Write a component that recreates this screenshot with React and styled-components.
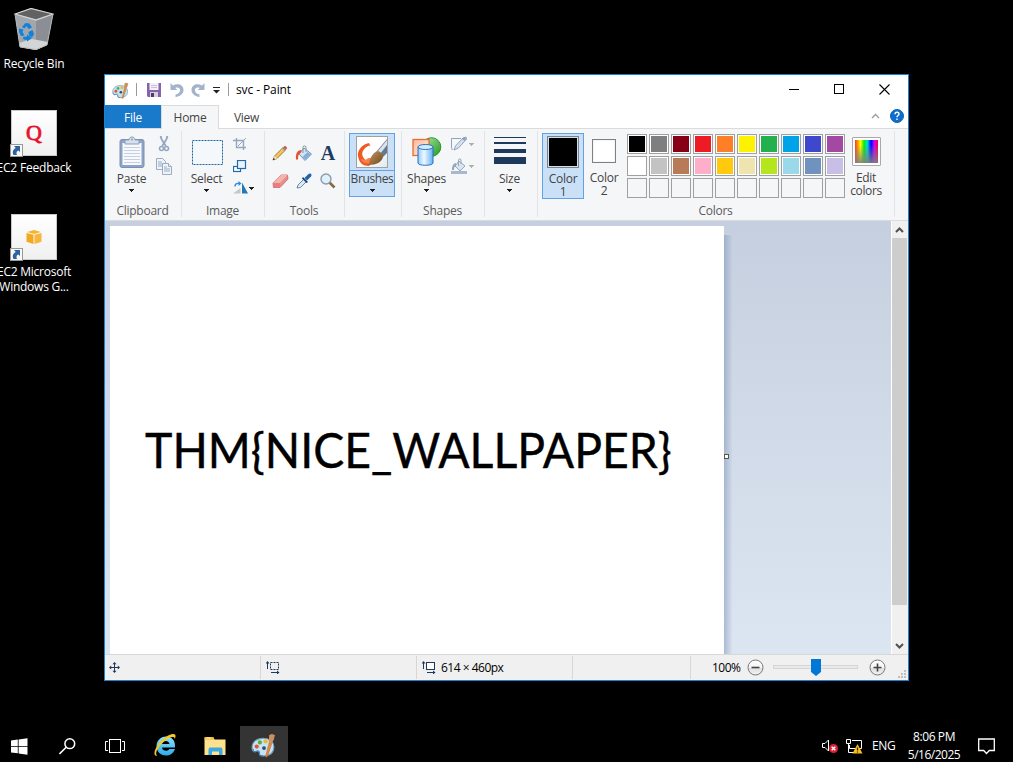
import React from 'react';
import styled, { createGlobalStyle, css } from 'styled-components';

const Global = createGlobalStyle`
  * { box-sizing: border-box; }
  html, body { margin: 0; background: #000; overflow: hidden; }
  body { font-family: "Open Sans", "Noto Sans", sans-serif; font-size: 12px; color: #000; }
  svg { display: block; flex: none; }
`;

const Desktop = styled.div`
  position: relative;
  width: 1013px;
  height: 762px;
  overflow: hidden;
  background: #000;
`;

const Text = styled.span`
  display: block;
  white-space: nowrap;
  font-size: 12px;
  line-height: ${p => p.$lh || 16}px;
  letter-spacing: ${p => p.$ls ?? -0.25}px;
`;

/* ---------- desktop shortcuts ---------- */

const Shortcut = styled.div`
  position: absolute;
  left: -16px;
  top: ${p => p.$top}px;
  width: 100px;
  display: flex;
  flex-direction: column;
  align-items: center;
  gap: ${p => p.$gap || 4}px;
  color: #fff;
  text-align: center;
`;

const ShortcutTile = styled.div`
  width: 46px;
  height: 46px;
  display: flex;
  align-items: center;
  justify-content: center;
  position: relative;
  border: 1px solid #c9c9c9;
  background: linear-gradient(#fff, #f0f0f0);
`;

const QMark = styled.span`
  font: 22px/24px "Liberation Serif", serif;
  -webkit-text-stroke: .8px #e8112d;
  color: #e8112d;
`;

const ArrowBadge = styled.div`
  position: absolute;
  left: -2px;
  bottom: -2px;
`;

const ShortcutArrow = () => (
  <ArrowBadge>
    <svg width="13" height="13" viewBox="0 0 13 13">
      <rect x=".5" y=".5" width="12" height="12" fill="#f8f8f8" stroke="#999" />
      <path d="M4 2h6v6L8.300 6.500C6.500 7 6 9 7 11H3.500C2 8 3 5.500 5.800 4z" fill="#2f62a3" />
    </svg>
  </ArrowBadge>
);

const RecycleBin = () => (
  <svg width="40" height="42" viewBox="0 0 40 42">
    <path d="M1 6 17 0 39 6 33 37 22 42 6 39z" fill="#85888d" />
    <path d="M1 6 22 12 22 42 6 39z" fill="#a3a6ab" />
    <path d="M22 12 39 6 33 37 22 42z" fill="#8b8f95" />
    <path d="M2 6 17 1 38 6 22 11z" fill="#626262" />
    <path d="M5 35 18 31 34 34 33 37 22 42 6 39z" fill="#d4d5d6" />
    <path d="M1 6 17 .500 39 6 22 12z" fill="none" stroke="#d3d5d8" strokeWidth="1.200" />
    <path d="M1 6 6 39 22 41.500 33 37 39 6" fill="none" stroke="#b6b8bb" />
    <g fill="#0d83dd">
      <path d="m8 19 3.500-4 4 .5 2.500 4-3.500 1.500-2-3-2 2.500z" />
      <path d="m5 20.500 4.500 1-1 2.500 2 3.500-3.500.5-2-4z" />
      <path d="m9 29 4-.5v-2l5 3.500-5 3.500v-1.500l-3.500-.5z" />
      <path d="m14.500 24 4-2 1.500 4-2 3.500-3-2z" />
    </g>
  </svg>
);

const AwsCube = () => (
  <svg width="16" height="16" viewBox="0 0 16 16">
    <path d="M1 3 8 1l7 2-7 2z" fill="#f8b52c" />
    <path d="M.5 4 7.500 5.800V15L.5 12.800z" fill="#f2a91f" />
    <path d="M8.500 5.800 15.500 4v8.800L8.500 15z" fill="#f6b73c" />
  </svg>
);

/* ---------- window frame ---------- */

const Window = styled.div`
  position: absolute;
  left: 104px;
  top: 74px;
  width: 805px;
  height: 607px;
  border: 1px solid #1883d7;
  background: #fff;
  display: flex;
  flex-direction: column;
`;

const TitleBar = styled.div`
  height: 30px;
  display: flex;
  align-items: center;
  padding-left: 7px;
`;

const TitleSlot = styled.div`
  width: ${p => p.$w}px;
  height: 100%;
  display: flex;
  align-items: center;
`;

const ThinSep = styled.div`
  width: 1px;
  height: 13px;
  margin-bottom: 2px;
  background: #9b9b9b;
`;

const Controls = styled.div`
  margin-left: auto;
  display: flex;
`;

const ControlButton = styled.div`
  width: ${p => p.$w || 45}px;
  height: 30px;
  display: flex;
  align-items: center;
  justify-content: center;
  padding-bottom: 2px;
`;

const TabBar = styled.div`
  height: 24px;
  display: flex;
  border-bottom: 1px solid #dadbdc;
  color: #444;
`;

const Tab = styled.div`
  width: ${p => p.$w}px;
  height: 23px;
  display: flex;
  align-items: center;
  justify-content: center;
  padding-top: 2px;
  ${p => p.$file && css`
    background: #1979ca;
    color: #fff;
  `}
  ${p => p.$active && css`
    height: 24px;
    border: 1px solid #dadbdc;
    border-bottom: 0;
    padding-top: 0;
    background: #f5f6f7;
  `}
`;

const TabTools = styled.div`
  margin-left: auto;
  display: flex;
  align-items: center;
  gap: 10px;
  padding: 0 4px 2px 0;
`;

/* ---------- ribbon ---------- */

const Ribbon = styled.div`
  height: 92px;
  display: flex;
  background: #f5f6f7;
  border-bottom: 1px solid #dadbdc;
  color: #444;
`;

const Group = styled.div`
  width: ${p => p.$w}px;
  height: 86px;
  margin-top: 2px;
  border-right: 1px solid #e2e3e4;
  display: flex;
  flex-direction: column;
`;

const GroupBody = styled.div`
  height: 71px;
  flex: none;
  display: flex;
  padding-left: ${p => p.$pl || 0}px;
`;

const GroupLabel = styled(Text)`
  text-align: center;
  color: #5b5b5b;
  padding: 1px 1px 0 0;
`;

const BigButton = styled.div`
  width: ${p => p.$w}px;
  height: ${p => p.$h || 64}px;
  margin-top: 2px;
  display: flex;
  flex-direction: column;
  align-items: center;
  text-align: center;
  ${p => p.$on && css`
    background: #c9e0f7;
    box-shadow: inset 0 0 0 1px #62a2e4;
  `}
`;

const IconArea = styled.div`
  height: 37px;
  width: 100%;
  display: flex;
  align-items: center;
  justify-content: center;
  ${p => p.$split && css`
    height: 38px;
    margin-bottom: -1px;
    border-bottom: 1px solid #62a2e4;
  `}
`;

const TwoLines = styled(Text)`
  line-height: 13px;
  padding-top: 2px;
`;

const SideColumn = styled.div`
  display: flex;
  flex-direction: column;
  margin-left: ${p => p.$ml || 0}px;
  padding-top: 2px;
`;

const SideRow = styled.div`
  height: 22px;
  display: flex;
  align-items: center;
  gap: ${p => p.$gap ?? 3}px;
`;

const ToolGrid = styled.div`
  display: grid;
  grid-template-columns: repeat(3, 24px);
  grid-template-rows: repeat(2, 28px);
  padding: 8px 0 0 3px;
  place-items: center;
`;

const Palette = styled.div`
  display: grid;
  grid-template-columns: repeat(10, 20px);
  grid-auto-rows: 20px;
  gap: 2px;
  margin: 3px 0 0 3px;
`;

const Swatch = styled.div`
  border: 1px solid #a0a0a0;
  padding: 1px;
  background: ${p => (p.$c ? '#fff' : '#f5f6f7')};
  &::after {
    content: '';
    display: block;
    height: 100%;
    background: ${p => p.$c || 'transparent'};
  }
`;

const ColorBox = styled.div`
  width: ${p => p.$s}px;
  height: ${p => p.$s}px;
  border: 1px solid #808080;
  padding: 1px;
  background: ${p => p.$c} content-box;
`;

const Down = ({ c = '#1e1e1e' }) => (
  <svg width="5" height="3" viewBox="0 0 5 3" shapeRendering="crispEdges">
    <path d="M0 0h5v1H4v1H3v1H2V2H1V1H0z" fill={c} />
  </svg>
);

const LabelSlot = styled.div`
  height: 16px;
  padding-top: 1px;
`;

const ArrowSlot = styled.div`
  height: 8px;
  display: flex;
  align-items: center;
`;

const PaletteIcon = ({ s }) => (
  <svg width={s} height={s} viewBox="0 0 24 24">
    <path d="M12 5C5 5 1 9 1 14c0 3 1 4 3 4 2-1 4-1 4 1s0 3 4 3c7 0 10-4 10-9 0-4-4-8-10-8z" fill="#c6e2f3" stroke="#6b9dbd" />
    <path d="M2 15c0 2 1 3 2 3 2-1 4-1 4 1 0 3 1 3 4 3" fill="none" stroke="#4380a8" />
    <circle cx="5.500" cy="13" r="2" fill="#e8503a" />
    <circle cx="8.500" cy="9" r="2" fill="#52b043" />
    <circle cx="14" cy="8" r="2" fill="#f4b431" />
    <circle cx="12.500" cy="14.500" r="1.800" fill="#284f70" />
    <path d="m14 23 3.500-14 2.500 1-4.500 13z" fill="#e58b3a" stroke="#b8601f" strokeWidth=".5" />
    <path d="m17 9 .5-7 2.500-1 3 1-1 4-2 4z" fill="#c99060" />
  </svg>
);

const SaveIcon = () => (
  <svg width="14" height="14" viewBox="0 0 14 14">
    <path d="M0 0h14v14H1L0 13z" fill="#8561ae" />
    <path d="M2.500 0h9v7h-9z" fill="#f3f1f6" />
    <path d="M4 2.500h6M4 4.500h6" stroke="#c9c2d4" />
    <path d="M3 9h8v5H3z" fill="#d5d0dc" />
    <path d="M4 10h3v4H4z" fill="#4b3d63" />
  </svg>
);

const Undo = ({ flip }) => (
  <svg width="14" height="14" viewBox="0 0 14 14">
    <g transform={flip ? 'matrix(-1 0 0 1 14 0)' : undefined}>
      <path d="M.5 0v7h7L5.200 5C8 3.800 10.300 5 10 7.800c-.3 2-2 3.200-4.500 3.700V14c5-.6 8-3.300 8-7.200C13.500 1.500 7.500-.2 2.900 2.500z" fill="#a3b3cb" />
    </g>
  </svg>
);

const PasteIcon = () => (
  <svg width="26" height="32" viewBox="0 0 26 32">
    <rect x="1" y="3.500" width="24" height="28" rx="2" fill="#8fa3c4" stroke="#7b90b4" />
    <rect x="3.500" y="7" width="19" height="22" fill="#f7f9fc" />
    <path d="M5 11.500h16M5 14.500h16M5 17.500h16M5 20.500h16M5 23.500h16M5 26.500h16" stroke="#c5d1e2" />
    <path d="M6 8V4h4c0-4 6-4 6 0h4v4z" fill="#d8e0ec" stroke="#8a9dbd" />
    <circle cx="13" cy="3.500" r="1" fill="#8a9dbd" />
  </svg>
);

const CutIcon = () => (
  <svg width="16" height="16" viewBox="0 0 16 16" fill="none" stroke="#95a6c1">
    <path d="M4.700 0c0 4 4 7 5 10M11.300 0c0 4-4 7-5 10" strokeWidth="1.800" />
    <circle cx="5.500" cy="12.500" r="2" strokeWidth="1.500" />
    <circle cx="10.500" cy="12.500" r="2" strokeWidth="1.500" />
  </svg>
);

const CopyIcon = () => (
  <svg width="16" height="17" viewBox="0 0 16 17" fill="#f0f4f9" stroke="#9aabc6">
    <path d="M.5.5h6l3 3v8h-9z" />
    <path d="M2 4h4M2 6h5M2 8h5" />
    <path d="M6.500 5.500h6l3 3v8h-9z" />
    <path d="M12.500 5.500v3h3M8 9h3M8 11h6M8 13h6" />
  </svg>
);

const SelectIcon = () => (
  <svg width="33" height="27" viewBox="0 0 33 27">
    <rect x="2.500" y="2.500" width="30" height="24" fill="#f5f8fb" stroke="#1565a7" strokeDasharray="2 1" />
  </svg>
);

const CropIcon = () => (
  <svg width="14" height="14" viewBox="0 0 14 14" fill="none" stroke="#93a7c3">
    <path d="M3.500 1v9.500H13M0 3.500h10.500V13" strokeWidth="1.400" />
    <path d="m5 9 8-8" />
  </svg>
);

const ResizeIcon = () => (
  <svg width="14" height="13" viewBox="0 0 14 13" stroke="#1f6ba8" strokeWidth="1.200">
    <rect x=".5" y="6.500" width="7" height="5" fill="#fff" />
    <rect x="4.500" y=".5" width="8" height="8" fill="#eaf3fb" />
  </svg>
);

const RotateIcon = () => (
  <svg width="15" height="14" viewBox="0 0 15 14">
    <path d="M0 12.500 7.500 7v5.500z" fill="#c3c8cd" />
    <path d="M9 1.500 15 12.500H9z" fill="#2678b3" />
    <path d="M2 5.500C2 3 3.500 2 6.500 2.500" fill="none" stroke="#2a8be0" strokeWidth="1.500" />
    <path d="m5.500 0 3 2.500-3 2.500z" fill="#2a8be0" />
  </svg>
);

const PencilIcon = () => (
  <svg width="16" height="16" viewBox="0 0 16 16">
    <path d="m1 15 1.500-4L11 2.500l2.500 2.500L5 13.500z" fill="#f1c45c" stroke="#91631e" strokeWidth=".8" />
    <path d="m11.300 2.300 1.200-1.300h1L15 2.500v1L13.700 4.700z" fill="#d9505c" />
    <path d="m10.200 3.300 1-1 2.500 2.500-1 1z" fill="#6b9a8d" />
    <path d="m2.500 11 2.500 2.500L1 15z" fill="#f7e6c8" />
    <path d="m.8 15.200.9-2.300 1.400 1.400z" fill="#222" />
  </svg>
);

const BucketIcon = () => (
  <svg width="18" height="17" viewBox="0 0 18 17">
    <path d="m9 3 7.500 6L10 15.500 4 9z" fill="#d3e3f3" stroke="#6f93b8" />
    <path d="M10.500 15 16 9.500 12.500 7 7.500 12z" fill="#84afd8" />
    <path d="M8 8V2c0-1.500 3-1.500 3 0v5" fill="none" stroke="#8b95a1" />
    <path d="M6.500 5C2 5 .5 9 1 14.500h2C3 11 3.500 8.500 6 7.500z" fill="#e4512b" />
  </svg>
);

const Glyph = styled.span`
  font: bold 20px/16px "Liberation Serif", serif;
  color: #1f3a63;
`;

const EraserIcon = () => (
  <svg width="17" height="15" viewBox="0 0 17 15">
    <path d="m1 9 8-8h6.500L16 5l-8 8.500H1.500z" fill="#ea8d8d" stroke="#c46666" strokeWidth=".8" />
    <path d="m1 9 8-8h6.500L8 9z" fill="#f5b3ae" />
    <path d="M1 9h7v4.500H1.500z" fill="#e67f80" />
  </svg>
);

const PickerIcon = () => (
  <svg width="16" height="16" viewBox="0 0 16 16">
    <path d="m1 15 1-3 6-6 2.500 2.500-6 6z" fill="#d8ebf8" stroke="#617d99" strokeWidth=".9" />
    <path d="m7 4 5 5-1.500 1L6 5.500z" fill="#193f73" />
    <path d="m8.500 5 4-4c2-1.500 4 .5 2.500 2.500l-4 4z" fill="#1d65b1" />
  </svg>
);

const MagnifierIcon = () => (
  <svg width="16" height="16" viewBox="0 0 16 16">
    <path d="m9 9 5.500 5.500" stroke="#8a6844" strokeWidth="2.600" />
    <circle cx="6" cy="6" r="5" fill="#e0f0fc" stroke="#8d9bab" strokeWidth="1.400" />
  </svg>
);

const BrushIcon = () => (
  <svg width="32" height="32" viewBox="0 0 32 32">
    <defs>
      <linearGradient id="bristle" x1="0" y1="0" x2="1" y2="1">
        <stop offset="0" stopColor="#c59663" />
        <stop offset="1" stopColor="#704619" />
      </linearGradient>
      <linearGradient id="paper" x2="1" y2="1">
        <stop offset=".5" stopColor="#fff" />
        <stop offset="1" stopColor="#dcebf2" />
      </linearGradient>
    </defs>
    <rect x=".5" y=".5" width="31" height="31" fill="url(#paper)" stroke="#a0a0a0" />
    <path d="M13 7C6 8 1 15 2 20c1 7 5 10 11 10l4-4-3-4-4 2C5 21 4 14 13 9.500l1.500 1z" fill="#ee5a23" />
    <path d="M5 23c1 4 5 5 9 4l2-4-4-1-2 2z" fill="#f98048" />
    <path d="M21 15 31 3v14l-4 4z" fill="#65798f" />
    <path d="m22 15 9-11v5l-7 9z" fill="#d8e5ee" />
    <path d="M13 29c0-6 3-11 8-14 3 0 6 3 6 6-1 5-7 8-14 8z" fill="url(#bristle)" />
  </svg>
);

const ShapesIcon = () => (
  <svg width="30" height="30" viewBox="0 0 30 30">
    <defs>
      <linearGradient id="cyl"><stop offset="0" stopColor="#8fcaff" /><stop offset=".4" stopColor="#eff9ff" /><stop offset="1" stopColor="#63b2f8" /></linearGradient>
      <linearGradient id="sq" x2="1" y2="1"><stop offset="0" stopColor="#ffb99a" /><stop offset="1" stopColor="#fff0e9" /></linearGradient>
      <linearGradient id="gr" x2="1" y2="1"><stop offset="0" stopColor="#b3e5a6" /><stop offset="1" stopColor="#1c9b21" /></linearGradient>
    </defs>
    <circle cx="19.500" cy="10" r="9.300" fill="url(#gr)" stroke="#2c952f" />
    <rect x="1" y="2.500" width="16" height="16" fill="url(#sq)" stroke="#e86a35" strokeWidth="1.300" />
    <path d="M6 10v16c0 3 15 3 15 0V10" fill="url(#cyl)" stroke="#2a6fbd" />
    <ellipse cx="13.500" cy="10" rx="7.500" ry="2.500" fill="#d5ecff" stroke="#2a6fbd" />
  </svg>
);

const OutlineIcon = () => (
  <svg width="16" height="16" viewBox="0 0 16 16">
    <path d="M10 2.500H.5v10M.5 13.500 2 13" stroke="#8fa3c1" fill="none" />
    <path d="m3 14 1.500-4L12 2l3-1 .5 2-8 9z" fill="#d8e2ee" stroke="#8fa3c1" />
    <path d="m11 3 2-2 2.500 2-2 2z" fill="#8fa3c1" />
  </svg>
);

const FillIcon = () => (
  <svg width="16" height="17" viewBox="0 0 16 17">
    <path d="m8 3 6 5-5 5-5-5z" fill="#dbe3ed" stroke="#94a7c1" />
    <path d="M7.500 8V2c0-1.500 2.500-1.500 2.500 0v4" fill="none" stroke="#94a7c1" />
    <path d="M5 5C2 5.500 1 8 1 12h2c0-2 0-3 2-4z" fill="#94a7c1" />
    <path d="M0 13h16v3H0z" fill="#a9b8ce" />
  </svg>
);

const SizeIcon = () => (
  <svg width="32" height="29" viewBox="0 0 32 29" shapeRendering="crispEdges">
    <path d="M0 0h32v1H0zM0 5h32v2H0zM0 12h32v4H0zM0 20h32v7H0z" fill="#1e395b" />
  </svg>
);

const Rainbow = styled.div`
  width: 29px;
  height: 29px;
  border: 1px solid #a9a9a9;
  border-radius: 1px;
  box-shadow: inset 0 0 0 1px #fff;
  padding: 2px;
  background:
    linear-gradient(rgba(128,128,128,0) 20%, rgba(128,128,128,.9)) content-box,
    linear-gradient(90deg, #f33, #f90 12%, #ff0 24%, #0e0 40%, #0dd 53%, #00f 70%, #c0f 84%, #f03) content-box,
    #fff;
`;

/* ---------- drawing area ---------- */

const Workspace = styled.div`
  height: 433px;
  display: flex;
  background: linear-gradient(#c5cfdf, #dce6f2);
`;

const Canvas = styled.div`
  width: 614px;
  height: 428px;
  margin: 5px 0 0 5px;
  position: relative;
  background: #fff;
`;

const CanvasShadow = styled.div`
  width: 8px;
  margin-top: 14px;
  background: linear-gradient(90deg, rgba(130,150,185,.55), rgba(130,150,185,.05));
`;

const Drawing = styled.span`
  position: absolute;
  left: 35px;
  top: 194px;
  font: 400 48px/60px Lato, sans-serif;
  white-space: nowrap;
  transform-origin: 0 50%;
  transform: scaleX(.966);
  -webkit-text-stroke: .4px #000;
`;

const Handle = styled.div`
  position: absolute;
  right: -5px;
  top: 228px;
  width: 5px;
  height: 5px;
  border: 1px solid #555;
  background: #fff;
`;

const Scrollbar = styled.div`
  margin-left: auto;
  width: 17px;
  height: 433px;
  background: #f0f0f0;
  border-left: 1px solid #fff;
  display: flex;
  flex-direction: column;
`;

const ScrollButton = styled.div`
  height: 17px;
  display: flex;
  align-items: center;
  justify-content: center;
  padding-right: 1px;
`;

const Thumb = styled.div`
  height: 367px;
  margin: 0 1px 32px 0;
  background: #cdcdcd;
`;

const Chevron = ({ down, c = '#505050', sw = 2 }) => (
  <svg width="9" height="6" viewBox="0 0 9 6">
    <path d={down ? 'M1 1l3.500 3.500L8 1' : 'M1 5l3.500-3.500L8 5'} fill="none" stroke={c} strokeWidth={sw} />
  </svg>
);

/* ---------- status bar ---------- */

const StatusBar = styled.div`
  height: 26px;
  display: flex;
  align-items: center;
  background: #f0f0f0;
  border-top: 1px solid #d7d7d7;
`;

const StatusCell = styled.div`
  width: ${p => p.$w}px;
  height: 23px;
  display: flex;
  align-items: center;
  padding-left: ${p => p.$pl ?? 5}px;
  gap: 5px;
  border-right: 1px solid #d7d7d7;
`;

const ZoomArea = styled.div`
  flex: 1;
  height: 25px;
  display: flex;
  align-items: center;
  padding-left: 21px;
`;

const ZoomText = styled(Text)`
  width: 35px;
`;

const SliderTrack = styled.div`
  width: 85px;
  height: 4px;
  margin: 0 11px 1px 9px;
  border: 1px solid #d6d6d6;
  background: #e7eaea;
  display: flex;
  align-items: center;
  padding-left: 37px;
`;

const Grip = styled.div`
  align-self: flex-end;
  margin: 0 2px 2px auto;
`;

const ZoomButton = ({ plus }) => (
  <svg width="17" height="17" viewBox="0 0 17 17">
    <defs>
      <linearGradient id="zb" x2="0" y2="1"><stop offset="0" stopColor="#fff" /><stop offset=".5" stopColor="#f5f5f5" /><stop offset=".51" stopColor="#dcdcdc" /><stop offset="1" stopColor="#f4f4f4" /></linearGradient>
    </defs>
    <circle cx="8.500" cy="8.500" r="7.500" fill="url(#zb)" stroke="#777" />
    <path d={plus ? 'M4.500 8.500h8M8.500 4.500v8' : 'M4.500 8.500h8'} stroke="#444" strokeWidth="1.600" />
  </svg>
);

const MoveIcon = () => (
  <svg width="11" height="11" viewBox="0 0 11 11">
    <path d="M5.500 1v9M1 5.500h9" stroke="#1e395b" />
    <path d="M5.500 0 7.500 2.200h-4zM5.500 11l2-2.200h-4zM0 5.500l2.200-2v4zM11 5.500l-2.200-2v4z" fill="#1e395b" />
  </svg>
);

const DimIcon = ({ dashed }) => (
  <svg width="14" height="13" viewBox="0 0 14 13">
    <path d="M1.500 1.500V8" stroke="#1e395b" />
    <path d="M1.500 0 3.500 2.500h-4z" fill="#1e395b" />
    <rect x="4.500" y="1.500" width="8" height="7" fill={dashed ? 'none' : '#fff'} stroke="#1e395b" strokeDasharray={dashed ? '2 1' : undefined} />
    <path d="M5 11.500h7" stroke="#1e395b" />
    <path d="m13.500 11.500-2.500-2v4z" fill="#1e395b" />
  </svg>
);

/* ---------- taskbar ---------- */

const Taskbar = styled.div`
  position: absolute;
  left: 0;
  top: 726px;
  width: 1013px;
  height: 40px;
  display: flex;
  color: #fff;
`;

const TaskButton = styled.div`
  width: 48px;
  display: flex;
  align-items: center;
  justify-content: center;
  background: ${p => (p.$active ? '#343434' : 'transparent')};
  padding: 0 ${p => p.$pr || 0}px ${p => p.$pb || 0}px 0;
`;

const Tray = styled.div`
  margin-left: auto;
  display: flex;
  align-items: center;
  padding-right: 18px;
`;

const TraySlot = styled.div`
  width: ${p => p.$w}px;
`;

const Clock = styled.div`
  width: 56px;
  margin-right: 16px;
  display: flex;
  flex-direction: column;
  align-items: center;
  gap: 2px;
`;

const WindowsLogo = () => (
  <svg width="17" height="17" viewBox="0 0 17 17" fill="#fff">
    <path d="M0 2.600 6.800 1.600V8H0zM7.600 1.500 16.500.2V8H7.600zM0 8.800h6.800v6.500L0 14.400zM7.600 8.800h8.900v7.900l-8.900-1.300z" />
  </svg>
);

const SearchIcon = () => (
  <svg width="17" height="17" viewBox="0 0 17 17" fill="none" stroke="#fff" strokeWidth="1.500">
    <circle cx="10.800" cy="5.700" r="4.900" />
    <path d="m7.200 9.200-6.700 6.700" />
  </svg>
);

const TaskViewIcon = () => (
  <svg width="20" height="14" viewBox="0 0 20 14" fill="none" stroke="#fff">
    <rect x="4.500" y=".5" width="11" height="13" />
    <path d="M3 2.500H.5v9H3M17 2.500h2.500v9H17" />
  </svg>
);

const IeIcon = () => (
  <svg width="24" height="24" viewBox="0 0 24 24">
    <defs><linearGradient id="ie" x2="0" y2="1"><stop offset="0" stopColor="#8be3fd" /><stop offset="1" stopColor="#2fa9ea" /></linearGradient></defs>
    <path d="M22 14.500H9c.3 3.500 5.500 4.500 7.500 1.500H22c-2 5-5.500 6.500-9 6.500-6 0-9.500-4.500-9.500-9.500S7.500 3.500 13 3.500c6 0 9.500 4 9 11zM9 11h7.500C16 7 9.500 7 9 11z" fill="url(#ie)" />
    <path d="M4 23C-1 23 2 14 8 8 14 2 21-.5 22.300 2c.5 1 .2 2.500-.6 4 0-3-4.500-2.500-10 2C5 13.500 1.500 20 4 23z" fill="#f6c62a" />
  </svg>
);

const FolderIcon = () => (
  <svg width="22" height="19" viewBox="0 0 22 19">
    <path d="M.5 1h9l1 1.500h11V18H.5z" fill="#ffe28b" />
    <path d="M.5 0h9l1 2.500H.5z" fill="#f3b93e" />
    <path d="M2.500 1h4" stroke="#fff4cb" />
    <path d="M4.500 18v-6l1-1.500h12l1 1.500v6h-3.500v-3.500h-7V18z" fill="#3da9e2" />
  </svg>
);

const VolumeIcon = () => (
  <svg width="17" height="16" viewBox="0 0 17 16">
    <path d="M.5 5.500h2.500l3.500-3.500v11L3 9.500H.5z" fill="none" stroke="#fff" />
    <circle cx="11.500" cy="10.500" r="4.500" fill="#e01f32" />
    <path d="m9.700 8.700 3.600 3.600m0-3.600-3.600 3.600" stroke="#fff" strokeWidth="1.400" />
  </svg>
);

const NetworkIcon = () => (
  <svg width="17" height="15" viewBox="0 0 17 15">
    <path d="M6 1.500h9.500v8H3.500V6M.5.5h4v4h-4zM2.500 5v8.500H9" fill="none" stroke="#fff" />
    <path d="m11.500 5 5 9.500h-10z" fill="#fdbd17" />
    <path d="M11.500 8.500v3M11.500 12.500v1" stroke="#222" strokeWidth="1.200" />
  </svg>
);

const ActionIcon = () => (
  <svg width="17" height="17" viewBox="0 0 17 17">
    <path d="M.7 1h15.600v11.500h-5l-2.800 3-2.800-3h-5z" fill="none" stroke="#fff" strokeWidth="1.300" />
  </svg>
);

const SWATCHES = [
  '#000', '#7f7f7f', '#880015', '#ed1c24', '#ff7f27', '#fff200', '#22b14c', '#00a2e8', '#3f48cc', '#a349a4',
  '#fff', '#c3c3c3', '#b97a57', '#ffaec9', '#ffc90e', '#efe4b0', '#b5e61d', '#99d9ea', '#7092be', '#c8bfe7',
  null, null, null, null, null, null, null, null, null, null,
];

const DropLabel = ({ label, ls }) => (
  <>
    <LabelSlot><Text $ls={ls}>{label}</Text></LabelSlot>
    <ArrowSlot><Down /></ArrowSlot>
  </>
);

export default function App() {
  return (
    <Desktop>
      <Global />

      <Shortcut $top={8} $gap={6}>
        <RecycleBin />
        <Text $lh={16} $ls={-0.15}>Recycle Bin</Text>
      </Shortcut>
      <Shortcut $top={110}>
        <ShortcutTile><QMark>Q</QMark><ShortcutArrow /></ShortcutTile>
        <Text $lh={16} $ls={-0.2}>EC2 Feedback</Text>
      </Shortcut>
      <Shortcut $top={214}>
        <ShortcutTile><AwsCube /><ShortcutArrow /></ShortcutTile>
        <Text $lh={15}>EC2 Microsoft<br />Windows G...</Text>
      </Shortcut>

      <Window>
        <TitleBar>
          <TitleSlot $w={24}><PaletteIcon s={17} /></TitleSlot>
          <TitleSlot $w={11}><ThinSep /></TitleSlot>
          <TitleSlot $w={23}><SaveIcon /></TitleSlot>
          <TitleSlot $w={21}><Undo /></TitleSlot>
          <TitleSlot $w={22}><Undo flip /></TitleSlot>
          <TitleSlot $w={15}>
            <svg width="7" height="7" viewBox="0 0 7 7"><path d="M0 .5h7" stroke="#222" /><path d="M0 3h7L3.500 6.500z" fill="#222" /></svg>
          </TitleSlot>
          <TitleSlot $w={8}><ThinSep /></TitleSlot>
          <Text $ls={-0.1}>svc - Paint</Text>
          <Controls>
            <ControlButton><svg width="10" height="10"><path d="M0 5.500h10" stroke="#000" /></svg></ControlButton>
            <ControlButton><svg width="10" height="10"><rect x=".5" y=".5" width="9" height="9" fill="none" stroke="#000" /></svg></ControlButton>
            <ControlButton $w={47}><svg width="11" height="11"><path d="m.5.5 10 10m0-10-10 10" stroke="#000" strokeWidth="1.100" /></svg></ControlButton>
          </Controls>
        </TitleBar>

        <TabBar>
          <Tab $w={56} $file><Text>File</Text></Tab>
          <Tab $w={58} $active><Text>Home</Text></Tab>
          <Tab $w={55}><Text>View</Text></Tab>
          <TabTools>
            <Chevron c="#9a9a9a" sw={1.3} />
            <svg width="14" height="14" viewBox="0 0 14 14">
              <circle cx="7" cy="7" r="6.500" fill="#0a6fd0" stroke="#1c5fa8" />
              <path d="M5 5.300C5 2.600 9 2.600 9 5c0 1.600-2 1.500-2 3.300M7 9.500v1.500" fill="none" stroke="#fff" strokeWidth="1.400" />
            </svg>
          </TabTools>
        </TabBar>

        <Ribbon>
          <Group $w={77}>
            <GroupBody $pl={4}>
              <BigButton $w={45}>
                <IconArea><PasteIcon /></IconArea>
                <DropLabel label="Paste" />
              </BigButton>
              <SideColumn $ml={2}>
                <SideRow><CutIcon /></SideRow>
                <SideRow><CopyIcon /></SideRow>
              </SideColumn>
            </GroupBody>
            <GroupLabel>Clipboard</GroupLabel>
          </Group>

          <Group $w={83}>
            <GroupBody $pl={2}>
              <BigButton $w={45}>
                <IconArea><SelectIcon /></IconArea>
                <DropLabel label="Select" />
              </BigButton>
              <SideColumn $ml={4}>
                <SideRow><CropIcon /></SideRow>
                <SideRow><ResizeIcon /></SideRow>
                <SideRow $gap={1}><RotateIcon /><Down /></SideRow>
              </SideColumn>
            </GroupBody>
            <GroupLabel>Image</GroupLabel>
          </Group>

          <Group $w={80}>
            <GroupBody>
              <ToolGrid>
                <PencilIcon /><BucketIcon /><Glyph>A</Glyph>
                <EraserIcon /><PickerIcon /><MagnifierIcon />
              </ToolGrid>
            </GroupBody>
            <GroupLabel>Tools</GroupLabel>
          </Group>

          <Group $w={57}>
            <GroupBody $pl={4}>
              <BigButton $w={46} $on>
                <IconArea $split><BrushIcon /></IconArea>
                <DropLabel label="Brushes" ls={-0.4} />
              </BigButton>
            </GroupBody>
          </Group>

          <Group $w={83}>
            <GroupBody $pl={1}>
              <BigButton $w={47}>
                <IconArea><ShapesIcon /></IconArea>
                <DropLabel label="Shapes" />
              </BigButton>
              <SideColumn $ml={1}>
                <SideRow $gap={2}><OutlineIcon /><Down c="#b0b0b0" /></SideRow>
                <SideRow $gap={2}><FillIcon /><Down c="#b0b0b0" /></SideRow>
              </SideColumn>
            </GroupBody>
            <GroupLabel>Shapes</GroupLabel>
          </Group>

          <Group $w={53}>
            <GroupBody $pl={2}>
              <BigButton $w={45}>
                <IconArea><SizeIcon /></IconArea>
                <DropLabel label="Size" />
              </BigButton>
            </GroupBody>
          </Group>

          <Group $w={357}>
            <GroupBody $pl={4}>
              <BigButton $w={42} $h={66} $on>
                <IconArea><ColorBox $s={32} $c="#000" /></IconArea>
                <TwoLines $lh={13}>Color<br />1</TwoLines>
              </BigButton>
              <BigButton $w={40}>
                <IconArea><ColorBox $s={24} $c="#fff" /></IconArea>
                <TwoLines $lh={13}>Color<br />2</TwoLines>
              </BigButton>
              <Palette>{SWATCHES.map((c, i) => <Swatch key={i} $c={c} />)}</Palette>
              <BigButton $w={42}>
                <IconArea><Rainbow /></IconArea>
                <TwoLines $lh={13} $ls={-0.35}>Edit<br />colors</TwoLines>
              </BigButton>
            </GroupBody>
            <GroupLabel>Colors</GroupLabel>
          </Group>
        </Ribbon>

        <Workspace>
          <Canvas>
            <Drawing>{'THM{NICE_WALLPAPER}'}</Drawing>
            <Handle />
          </Canvas>
          <CanvasShadow />
          <Scrollbar>
            <ScrollButton><Chevron /></ScrollButton>
            <Thumb />
            <ScrollButton><Chevron down /></ScrollButton>
          </Scrollbar>
        </Workspace>

        <StatusBar>
          <StatusCell $w={156} $pl={4}><MoveIcon /></StatusCell>
          <StatusCell $w={156}><DimIcon dashed /></StatusCell>
          <StatusCell $w={156}><DimIcon /><Text $ls={-0.5}>614 × 460px</Text></StatusCell>
          <StatusCell $w={118} />
          <ZoomArea>
            <ZoomText $ls={-0.5}>100%</ZoomText>
            <ZoomButton />
            <SliderTrack>
              <svg width="10" height="17" viewBox="0 0 10 17"><path d="M0 0h10v13l-5 4-5-4z" fill="#0078d7" /></svg>
            </SliderTrack>
            <ZoomButton plus />
            <Grip>
              <svg width="8" height="8" viewBox="0 0 8 8" fill="#bfbfbf"><path d="M6 0h2v2H6zM3 3h2v2H3zM6 3h2v2H6zM0 6h2v2H0zM3 6h2v2H3zM6 6h2v2H6z" /></svg>
            </Grip>
          </ZoomArea>
        </StatusBar>
      </Window>

      <Taskbar>
        <TaskButton $pr={10}><WindowsLogo /></TaskButton>
        <TaskButton $pr={9}><SearchIcon /></TaskButton>
        <TaskButton $pr={10}><TaskViewIcon /></TaskButton>
        <TaskButton $pr={6} $pb={2}><IeIcon /></TaskButton>
        <TaskButton $pr={2}><FolderIcon /></TaskButton>
        <TaskButton $active $pr={1} $pb={1}><PaletteIcon s={25} /></TaskButton>
        <Tray>
          <TraySlot $w={24}><VolumeIcon /></TraySlot>
          <TraySlot $w={26}><NetworkIcon /></TraySlot>
          <TraySlot $w={34}><Text $ls={-0.4}>ENG</Text></TraySlot>
          <Clock><Text $ls={-0.4}>8:06 PM</Text><Text $ls={-0.5}>5/16/2025</Text></Clock>
          <ActionIcon />
        </Tray>
      </Taskbar>
    </Desktop>
  );
}
